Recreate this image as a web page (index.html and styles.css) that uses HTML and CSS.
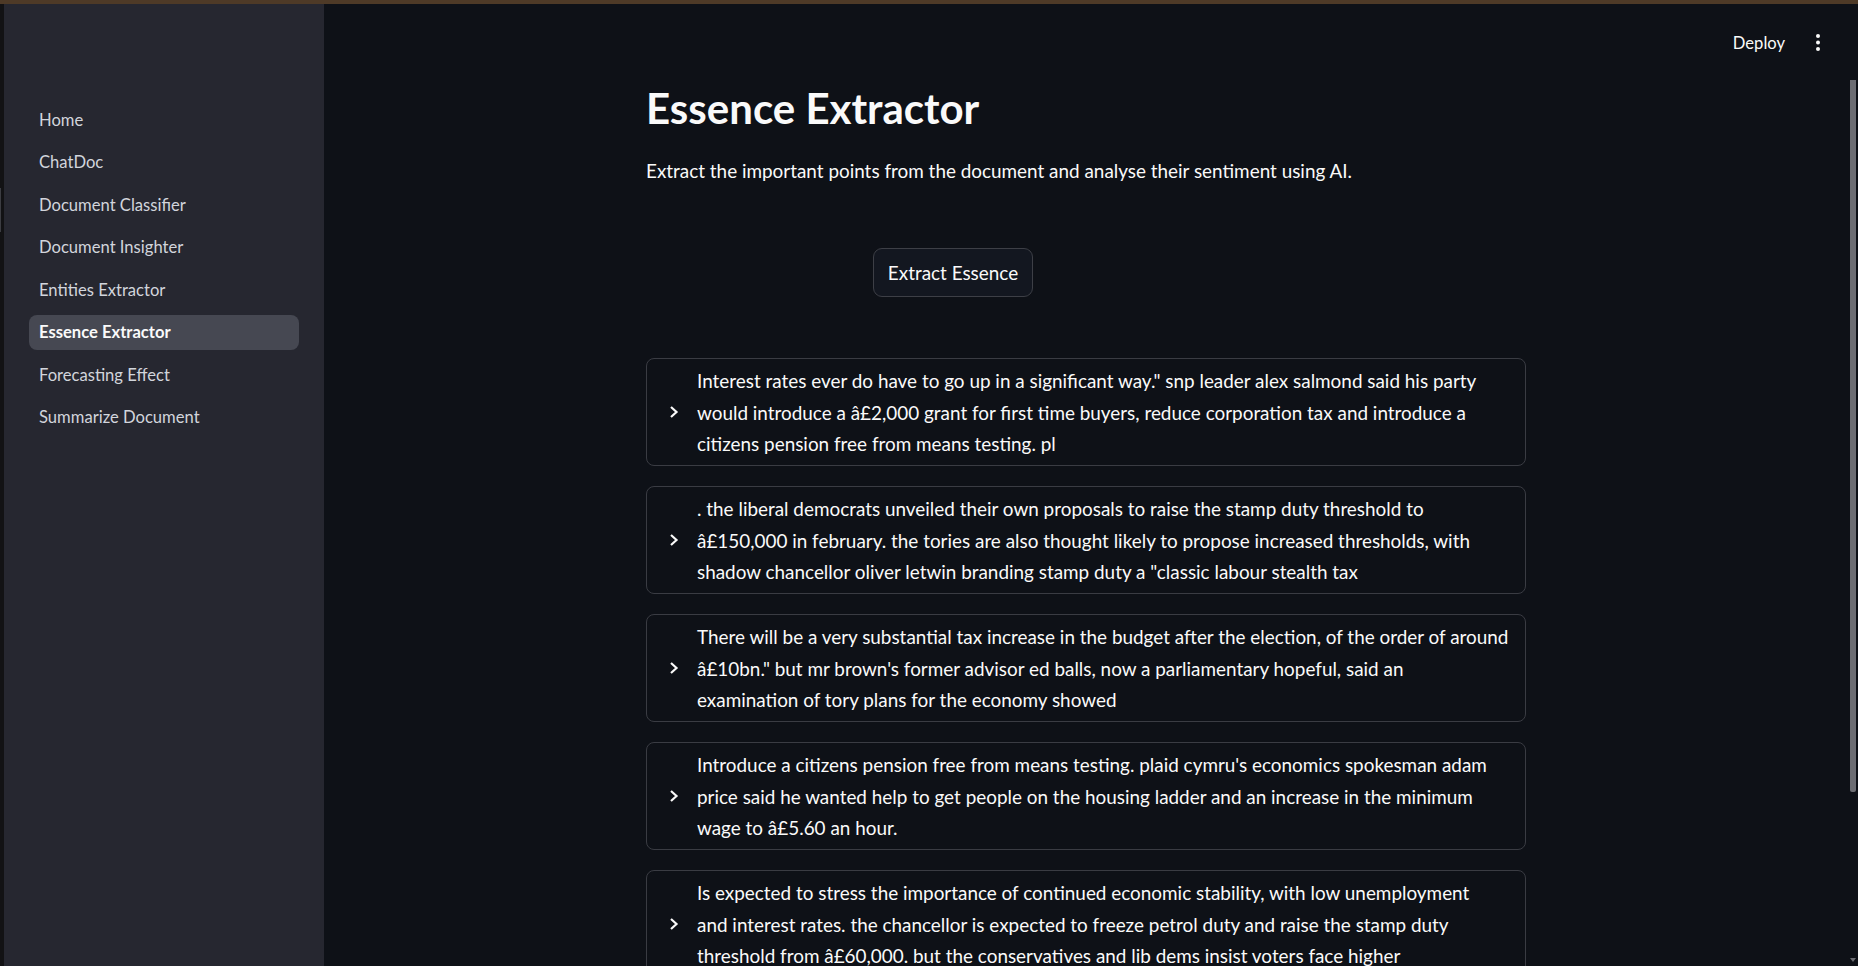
FILE: index.html
```html
<!DOCTYPE html>
<html lang="en">
<head>
<meta charset="utf-8">
<title>Essence Extractor</title>
<link rel="stylesheet" href="styles.css">
</head>
<body>
<div class="topline"></div>
<div class="app">
  <div class="edge"><span class="edge-mark"></span></div>
  <aside class="sidebar">
    <nav class="nav">
      <a class="nav-item">Home</a>
      <a class="nav-item">ChatDoc</a>
      <a class="nav-item">Document Classifier</a>
      <a class="nav-item">Document Insighter</a>
      <a class="nav-item">Entities Extractor</a>
      <a class="nav-item active">Essence Extractor</a>
      <a class="nav-item">Forecasting Effect</a>
      <a class="nav-item">Summarize Document</a>
    </nav>
  </aside>
  <main class="main">
    <div class="scroller">
      <header class="header">
        <span class="deploy">Deploy</span>
        <svg class="kebab" width="4" height="18" viewBox="0 0 4 18"><circle cx="2" cy="2" r="2" fill="#fafafa"/><circle cx="2" cy="8.5" r="2" fill="#fafafa"/><circle cx="2" cy="15" r="2" fill="#fafafa"/></svg>
      </header>
      <section class="content">
        <h1 class="title">Essence Extractor</h1>
        <p class="lead">Extract the important points from the document and analyse their sentiment using AI.</p>
        <div class="cols">
          <div class="col-spacer"></div>
          <div class="col"><button class="btn">Extract Essence</button></div>
        </div>
        <div class="expanders">
          <details class="exp"><summary class="exp-sum"><svg class="chev" width="16" height="16" viewBox="0 0 16 16"><path d="M4 3 L9.5 8 L4 13" fill="none" stroke="#fafafa" stroke-width="2.2"/></svg><span class="exp-text">Interest rates ever do have to go up in a significant way." snp leader alex salmond said his party<br>would introduce a â£2,000 grant for first time buyers, reduce corporation tax and introduce a<br>citizens pension free from means testing. pl</span></summary></details>
          <details class="exp"><summary class="exp-sum"><svg class="chev" width="16" height="16" viewBox="0 0 16 16"><path d="M4 3 L9.5 8 L4 13" fill="none" stroke="#fafafa" stroke-width="2.2"/></svg><span class="exp-text">. the liberal democrats unveiled their own proposals to raise the stamp duty threshold to<br>â£150,000 in february. the tories are also thought likely to propose increased thresholds, with<br>shadow chancellor oliver letwin branding stamp duty a "classic labour stealth tax</span></summary></details>
          <details class="exp"><summary class="exp-sum"><svg class="chev" width="16" height="16" viewBox="0 0 16 16"><path d="M4 3 L9.5 8 L4 13" fill="none" stroke="#fafafa" stroke-width="2.2"/></svg><span class="exp-text">There will be a very substantial tax increase in the budget after the election, of the order of around<br>â£10bn." but mr brown's former advisor ed balls, now a parliamentary hopeful, said an<br>examination of tory plans for the economy showed</span></summary></details>
          <details class="exp"><summary class="exp-sum"><svg class="chev" width="16" height="16" viewBox="0 0 16 16"><path d="M4 3 L9.5 8 L4 13" fill="none" stroke="#fafafa" stroke-width="2.2"/></svg><span class="exp-text">Introduce a citizens pension free from means testing. plaid cymru's economics spokesman adam<br>price said he wanted help to get people on the housing ladder and an increase in the minimum<br>wage to â£5.60 an hour.</span></summary></details>
          <details class="exp"><summary class="exp-sum"><svg class="chev" width="16" height="16" viewBox="0 0 16 16"><path d="M4 3 L9.5 8 L4 13" fill="none" stroke="#fafafa" stroke-width="2.2"/></svg><span class="exp-text">Is expected to stress the importance of continued economic stability, with low unemployment<br>and interest rates. the chancellor is expected to freeze petrol duty and raise the stamp duty<br>threshold from â£60,000. but the conservatives and lib dems insist voters face higher</span></summary></details>
        </div>
      </section>
    </div>
    <div class="rail">
      <div class="thumb"></div>
      <svg class="rail-arrow" width="6" height="4" viewBox="0 0 6 4"><path d="M0 0 H6 L3 4 Z" fill="#6c6d73"/></svg>
    </div>
  </main>
</div>
</body>
</html>
```

FILE: styles.css
```css
* { box-sizing: border-box; }
html, body {
  margin: 0;
  padding: 0;
  height: 100%;
  overflow: hidden;
}
body {
  background: #0e1117;
  color: #fafafa;
  font-family: "Lato", "Noto Sans", sans-serif;
  display: flex;
  flex-direction: column;
}
.topline {
  height: 4px;
  flex: none;
  background: #4e3a27;
}
.app {
  flex: 1;
  display: flex;
  min-height: 0;
}
.edge {
  width: 4px;
  flex: none;
  background: #121214;
  padding-top: 184px;
}
.edge-mark {
  display: block;
  width: 1px;
  height: 44px;
  background: #3c3d42;
}
.sidebar {
  width: 320px;
  flex: none;
  background: #262730;
  padding: 98px 25px 0 25px;
}
.nav {
  display: flex;
  flex-direction: column;
  gap: 7.5px;
}
.nav-item {
  display: flex;
  align-items: center;
  height: 35px;
  padding-left: 10px;
  border-radius: 8px;
  font-size: 16.6px;
  color: #d2d5dc;
}
.nav-item.active {
  background: #464852;
  color: #fafafa;
  font-weight: 700;
}
.main {
  flex: 1;
  display: flex;
  min-width: 0;
}
.scroller {
  flex: 1;
  min-width: 0;
  overflow: hidden;
}
.rail {
  width: 10px;
  flex: none;
  display: flex;
  flex-direction: column;
  align-items: center;
  padding: 76px 0 4px 0;
}
.thumb {
  width: 6px;
  height: 712px;
  background: #6c6d73;
  border-radius: 0 0 2px 2px;
}
.rail-arrow {
  margin-top: auto;
  display: block;
}
.header {
  height: 78px;
  display: flex;
  align-items: center;
  justify-content: flex-end;
  gap: 31px;
  padding-right: 28px;
}
.deploy {
  font-size: 16.6px;
  color: #fafafa;
}
.kebab {
  display: block;
}
.content {
  width: 880px;
  margin: 0 auto;
}
.title {
  margin: 0;
  font-size: 42px;
  line-height: 1.2;
  font-weight: 700;
  padding-top: 1.2px;
}
.lead {
  margin: 21.2px 0 0 0;
  font-size: 18.9px;
  line-height: 32px;
}
.cols {
  display: flex;
  gap: 20px;
  margin-top: 61.5px;
}
.col-spacer {
  width: 207px;
}
.btn {
  height: 49px;
  width: 160px;
  border: 1px solid #3d3f46;
  border-radius: 9px;
  background: #131720;
  color: #fafafa;
  font-family: inherit;
  font-size: 18.9px;
  padding: 0;
}
.expanders {
  margin-top: 61px;
  display: flex;
  flex-direction: column;
  gap: 20px;
}
.exp {
  border: 1px solid #3a3c43;
  border-radius: 8px;
}
.exp-sum {
  list-style: none;
  display: flex;
  align-items: center;
  gap: 14px;
  padding: 6px 6px 6px 20px;
  font-size: 18.9px;
  line-height: 31.33px;
}
.exp-sum::-webkit-details-marker { display: none; }
.chev {
  flex: none;
  display: block;
}
.exp-text {
  flex: 1;
  white-space: nowrap;
}
```
